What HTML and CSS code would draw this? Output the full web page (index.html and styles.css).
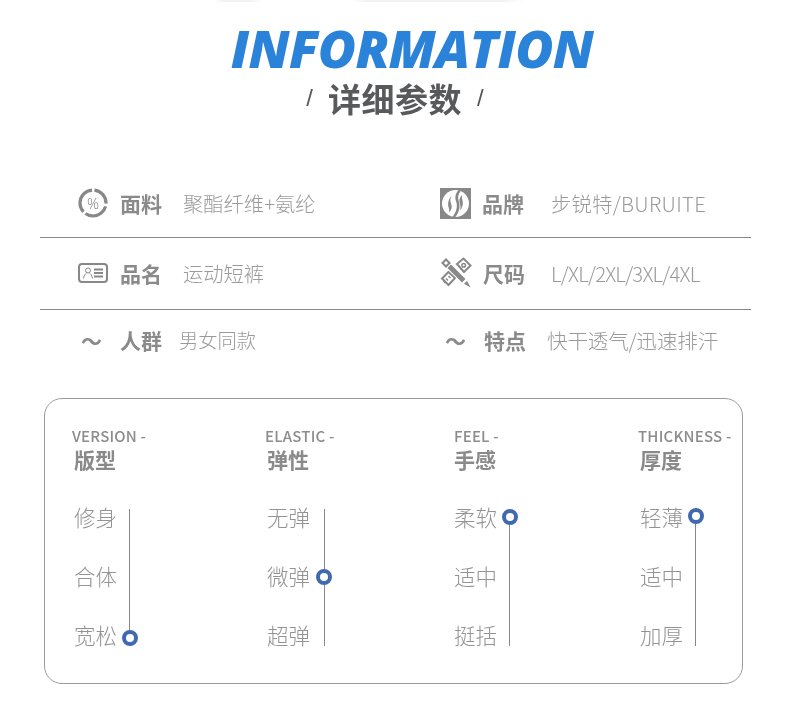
FILE: index.html
```html
<!DOCTYPE html>
<html lang="zh-CN">
<head>
<meta charset="utf-8">
<title>详细参数</title>
<link rel="stylesheet" href="styles.css">
</head>
<body>
<main class="page">
  <div class="top-fade"></div>
  <header class="title">
    <h1 class="title-en">INFORMATION</h1>
    <div class="title-cn"><span class="slash">/</span><h2>详细参数</h2><span class="slash">/</span></div>
  </header>

  <section class="specs">
    <div class="spec-row spec-row-first">
      <div class="spec spec-left">
        <svg class="icon" width="30" height="30" viewBox="0 0 30 30"><circle cx="15" cy="15" r="13" fill="none" stroke="#888" stroke-width="3.200" stroke-dasharray="25 2.500 29 2.500 20 2.700" stroke-dashoffset="-3.400"/><text x="15" y="20.500" text-anchor="middle" class="pct">%</text></svg>
        <span class="label">面料</span><span class="value">聚酯纤维+氨纶</span>
      </div>
      <div class="spec spec-right">
        <svg class="icon" width="31" height="31" viewBox="0 0 31 31"><rect width="31" height="31" fill="#888"/><circle cx="15.500" cy="15.500" r="13.500" fill="#fff"/><path d="M18.500 2C15 6 14.800 10 16.300 14C17.500 18 17 23 12.500 29L15 29.500C19.500 24 20.500 18.500 18.800 13.500C17.500 9.500 18 6 21 2.500Z" fill="#888"/><path d="M11.500 8C8 12 7.500 16 8.800 20C9.200 21.500 9.300 23 9 24.500C11.500 22 12.500 19 11 15.500C10 13 10.300 10.500 11.500 8Z" fill="#888"/><path d="M22 7C21.700 8.500 21.800 10 22.200 11.500C23.500 15 23 19 19.500 23.500C20.700 21 21 18.500 20 16C18.500 12.500 19.500 9.500 22 7Z" fill="#888"/></svg>
        <span class="label">品牌</span><span class="value value-loose">步锐特/BURUITE</span>
      </div>
    </div>
    <div class="spec-row spec-row-mid">
      <div class="spec spec-left">
        <svg class="icon" width="30" height="20" viewBox="0 0 30 20"><rect x="1" y="1" width="28" height="18" rx="3" fill="none" stroke="#888" stroke-width="2"/><circle cx="10" cy="7.500" r="2.500" fill="none" stroke="#888"/><path d="M5.500 15.500C6 12 7.500 11 8.500 10M14.500 15.500C14 12 12.500 11 11.500 10" fill="none" stroke="#888"/><path d="M16 6.500H25M16 10H25M16 13.500H25" stroke="#888" stroke-width="2"/></svg>
        <span class="label">品名</span><span class="value">运动短裤</span>
      </div>
      <div class="spec spec-right">
        <svg class="icon" width="32" height="32" viewBox="0 0 32 32"><g fill="none" stroke="#888" stroke-width="2"><path d="M17 7L23.500 1.500L30.500 8.500L24 15Z"/><circle cx="23.700" cy="8.300" r="1.800" stroke-width="1.500"/><path d="M15 21L8.500 28L2 21.500L8.500 15Z"/></g><path d="M6 21.500L8 23.500M8.500 19L10.500 21M3.500 24L5.500 26" stroke="#888" stroke-width="1.500"/><path d="M14 12L19 17L16 20L11 15Z" fill="#888"/><path d="M1 6L6 1L27 22.500L32 32L22.500 27Z" fill="#fff"/><path d="M2.500 6L6 2.500L9.500 6L6 9.500Z" fill="none" stroke="#888" stroke-width="2"/><path d="M7.500 11L11 7.500L25.500 22L22 25.500Z" fill="#888"/><path d="M24 26.800L27 23.800L30.500 30.500Z" fill="#888"/></svg>
        <span class="label">尺码</span><span class="value value-tight">L/XL/2XL/3XL/4XL</span>
      </div>
    </div>
    <div class="spec-row spec-row-plain">
      <div class="spec spec-left spec-tilde">
        <span class="tilde">～</span><span class="label">人群</span><span class="value">男女同款</span>
      </div>
      <div class="spec spec-right spec-tilde">
        <span class="tilde">～</span><span class="label">特点</span><span class="value">快干透气/迅速排汗</span>
      </div>
    </div>
  </section>

  <section class="panel">
    <div class="col col-first">
      <div class="col-en">VERSION -</div><div class="col-cn">版型</div>
      <div class="opts">
        <div class="opt">修身</div><div class="opt">合体</div><div class="opt">宽松<i class="dot"></i></div>
      </div>
    </div>
    <div class="col col-wide">
      <div class="col-en">ELASTIC -</div><div class="col-cn">弹性</div>
      <div class="opts">
        <div class="opt">无弹</div><div class="opt">微弹<i class="dot"></i></div><div class="opt">超弹</div>
      </div>
    </div>
    <div class="col col-flush">
      <div class="col-en">FEEL -</div><div class="col-cn">手感</div>
      <div class="opts">
        <div class="opt">柔软<i class="dot"></i></div><div class="opt">适中</div><div class="opt">挺括</div>
      </div>
    </div>
    <div class="col col-last">
      <div class="col-en">THICKNESS -</div><div class="col-cn">厚度</div>
      <div class="opts">
        <div class="opt">轻薄<i class="dot"></i></div><div class="opt">适中</div><div class="opt">加厚</div>
      </div>
    </div>
  </section>
</main>
</body>
</html>
```
FILE: styles.css
```css
* { box-sizing: border-box; }
html, body { margin: 0; padding: 0; background: #fff; }
body { font-family: "Noto Sans CJK SC", "Noto Sans", sans-serif; color: #8c8c8c; }
.page { width: 790px; height: 713px; overflow: hidden; will-change: transform; }

.top-fade {
  height: 2px;
  margin-bottom: 16px;
  background: linear-gradient(90deg, #fff 215px, #f1f1f1 225px, #f1f1f1 250px, #fff 262px, #fff 350px, #f1f1f1 370px, #f1f1f1 500px, #fff 525px);
}
.title { display: flex; flex-direction: column; align-items: center; }
.title-en {
  margin: 0;
  padding-left: 34px;
  font-family: "Open Sans", sans-serif;
  font-size: 52px;
  font-weight: 800;
  font-style: italic;
  line-height: 60px;
  color: #2b82d9;
  letter-spacing: -0.7px;
}
.title-cn { display: flex; align-items: center; gap: 15px; height: 44px; margin-top: -2px; }
.title-cn h2 { margin: 0; font-size: 33px; font-weight: 700; line-height: 44px; letter-spacing: 0.5px; color: #58595b; }
.slash { font-family: "Liberation Sans", sans-serif; font-size: 24px; color: #58595b; }

.specs { margin: 48px 39px 0 40px; }
.spec-row { display: grid; grid-template-columns: 362px 1fr; height: 72px; border-bottom: 1px solid #888; align-items: center; }
.spec-row-first { height: 70px; padding-top: 1px; }
.spec-row-mid { padding-bottom: 2px; }
.spec-row-plain { height: 62px; padding-bottom: 2px; border-bottom: 0; }
.spec { display: flex; align-items: center; }
.spec-left { padding-left: 38px; }
.spec-right { padding-left: 38px; }
.icon { display: block; flex: none; }
.pct { font-family: "Open Sans", sans-serif; font-weight: 300; font-size: 15px; fill: #808080; }
.label { font-size: 21px; font-weight: 700; color: #8a8a8a; line-height: 28px; }
.value { font-size: 20.3px; font-weight: 300; color: #9a9a9a; line-height: 28px; }
.value-loose { letter-spacing: 0.3px; }
.value-tight { letter-spacing: -0.8px; }
.spec-left .icon { margin-right: 12px; }
.spec-left .value { margin-left: 21px; }
.spec-right .icon { margin-right: 11px; }
.spec-right .value { margin-left: 27px; }
.spec-right .value-tight { margin-left: 26px; }
.spec-tilde .tilde { width: 39px; flex: none; margin-left: 3px; font-size: 21px; font-weight: 700; color: #8a8a8a; }
.spec-right.spec-tilde { padding-left: 40px; }
.spec-left.spec-tilde .value { margin-left: 17px; font-size: 19.3px; }
.spec-right.spec-tilde .value { margin-left: 21px; font-size: 20.6px; letter-spacing: -0.2px; }

.panel {
  display: grid;
  grid-template-columns: 193px 189px 184px 1fr;
  width: 699px;
  height: 286px;
  margin: 26px 0 0 44px;
  padding: 27px 0 0 27px;
  border: 1px solid #9b9b9b;
  border-radius: 18px;
}
.col-en { font-size: 15px; font-weight: 500; line-height: 20px; letter-spacing: 0.2px; color: #8c8c8c; }
.col-cn { font-size: 21px; font-weight: 700; line-height: 26px; color: #8a8a8a; padding-left: 2px; }
.col-flush .col-cn { padding-left: 0; }
.opts { position: relative; margin: 14px 0 0 2px; }
.col-flush .opts { margin-left: 0; }
.opts::before { content: ""; position: absolute; left: 55px; top: 23px; bottom: 17px; width: 1px; background: #888; }
.col-wide .opts::before { left: 57px; }
.opt { position: relative; height: 59px; padding-top: 2px; display: flex; align-items: center; font-size: 21.5px; font-weight: 300; color: #939393; }
.dot { position: absolute; left: 48px; top: 23px; width: 16px; height: 16px; border: 4px solid #4169b0; border-radius: 50%; background: #fff; }
.col-first .dot { top: 26px; }
.col-wide .dot { left: 49px; top: 24px; }
.col-last .dot { top: 22px; }
```
